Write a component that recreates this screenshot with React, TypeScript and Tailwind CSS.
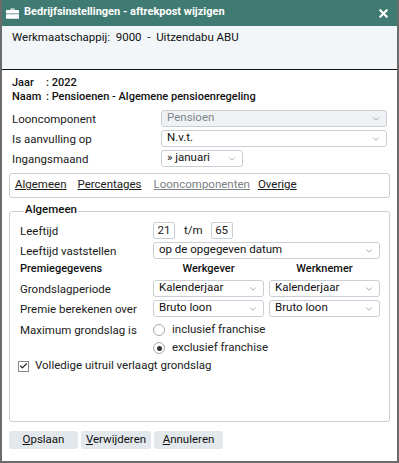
import { Check, ChevronDown, X } from 'lucide-react';

function Select({ value, className = '', disabled = false }: { value: string; className?: string; disabled?: boolean }) {
  return (
    <div
      className={`flex items-center justify-between h-[17px] pl-[5px] pr-[5px] border border-[#c9cfd4] rounded-[3px] ${
        disabled ? 'bg-[#eff2f5] text-[#80858a]' : 'bg-white text-[#111]'
      } ${className}`}
    >
      <span className="leading-none -mt-[2px]">{value}</span>
      <ChevronDown className="w-[10px] h-[10px] text-[#777]" strokeWidth={1.5} />
    </div>
  );
}

function Row({ label, w, children }: { label: string; w: string; children: React.ReactNode }) {
  return (
    <div className="flex items-center h-[17px]">
      <div className={`${w} shrink-0 pt-[3px]`}>{label}</div>
      {children}
    </div>
  );
}

function Radio({ checked, label }: { checked?: boolean; label: string }) {
  return (
    <div className="flex items-center gap-[7px] h-[18px]">
      <span className="w-[12px] h-[12px] rounded-full border border-[#a3a8ad] bg-white flex items-center justify-center">
        {checked && <span className="w-[5px] h-[5px] rounded-full bg-[#333]" />}
      </span>
      <span className="text-[#222]">{label}</span>
    </div>
  );
}

function Btn({ hot, rest, w }: { hot: string; rest: string; w: string }) {
  return (
    <button className={`h-[18px] ${w} bg-[#e3e8ec] rounded-[3px] text-center text-[#111] leading-none`}>
      <span className="underline">{hot}</span>
      {rest}
    </button>
  );
}

export default function App() {
  return (
    <div
      className="w-[399px] h-[463px] flex flex-col bg-white border-x-2 border-b-2 border-[#6b6b6b] text-[11.5px] text-[#1a1a1a] overflow-hidden"
      style={{ fontFamily: 'Roboto, "Liberation Sans", sans-serif' }}
    >
      <div className="h-[26px] bg-[#3f7b72] flex items-center justify-between -mx-[2px] pl-[6px] pr-[9px] text-white shrink-0">
        <div className="flex items-center gap-[5px]">
          <svg width="13" height="11" viewBox="0 0 13 11" fill="white">
            <path d="M4.5 0.5h4v1.5h-1v-0.5h-2v0.5h-1z" />
            <rect x="0" y="2" width="13" height="3.5" rx="0.5" />
            <rect x="0" y="6.3" width="13" height="4.5" rx="0.5" />
          </svg>
          <span className="font-bold text-[11px] pb-[1px]">Bedrijfsinstellingen - aftrekpost wijzigen</span>
        </div>
        <X className="w-[13px] h-[13px]" strokeWidth={4} />
      </div>

      <div className="h-[44px] bg-[#f2f6f9] border-b border-[#111] px-[10px] pt-[4px] shrink-0 text-[#111] leading-[14px]">
        Werkmaatschappij:&nbsp; 9000 &nbsp;- &nbsp;Uitzendabu ABU
      </div>

      <div className="flex-1 flex flex-col px-[7px] pt-[6px]">
        <div className="px-[3px] font-medium text-[11px] text-[#111] leading-[14px]">
          <div className="flex">
            <span className="w-[34px]">Jaar</span>
            <span>: 2022</span>
          </div>
          <div className="flex">
            <span className="w-[34px]">Naam</span>
            <span>: Pensioenen - Algemene pensioenregeling</span>
          </div>
        </div>

        <div className="px-[3px] mt-[6px] flex flex-col gap-[3px]">
          <Row label="Looncomponent" w="w-[149px]">
            <Select value="Pensioen" disabled className="w-[228px]" />
          </Row>
          <Row label="Is aanvulling op" w="w-[149px]">
            <Select value="N.v.t." className="w-[228px]" />
          </Row>
          <Row label="Ingangsmaand" w="w-[149px]">
            <Select value="» januari" className="w-[82px]" />
          </Row>
        </div>

        <div className="mt-[6px] h-[25px] border border-[#c9cfd4] rounded-[3px] flex items-center px-[5px] pb-[1px]">
          <span className="underline">Algemeen</span>
          <span className="underline ml-[11px]">Percentages</span>
          <span className="underline ml-[12px] text-[#7a7f85]">Looncomponenten</span>
          <span className="underline ml-[8px]">Overige</span>
        </div>

        <fieldset className="mt-[6px] h-[218px] border border-[#c9cfd4] rounded-[3px] pl-[10px] pr-[7px]">
          <legend className="px-[1px] ml-[4px] text-[11.5px] leading-[14px] font-medium text-[#111] -translate-y-[2px]">
            Algemeen
          </legend>
          <div className="flex flex-col mt-[4px]">
            <Row label="Leeftijd" w="w-[133px]">
              <div className="w-[22px] h-[17px] border border-[#c9cfd4] rounded-[2px] flex items-center justify-center">21</div>
              <span className="ml-[9px] mr-[8px]">t/m</span>
              <div className="w-[22px] h-[17px] border border-[#c9cfd4] rounded-[2px] flex items-center justify-center">65</div>
            </Row>
            <div className="mt-[3px]">
              <Row label="Leeftijd vaststellen" w="w-[133px]">
                <Select value="op de opgegeven datum" className="w-[227px]" />
              </Row>
            </div>
            <div className="flex items-center h-[16px] mt-[2px] font-medium text-[11px] text-[#111]">
              <div className="w-[133px]">Premiegegevens</div>
              <div className="w-[111px] text-center">Werkgever</div>
              <div className="w-[116px] text-center pl-[5px]">Werknemer</div>
            </div>
            <div className="mt-[3px] flex flex-col gap-[3px]">
              <Row label="Grondslagperiode" w="w-[133px]">
                <Select value="Kalenderjaar" className="w-[111px]" />
                <Select value="Kalenderjaar" className="w-[111px] ml-[5px]" />
              </Row>
              <Row label="Premie berekenen over" w="w-[133px]">
                <Select value="Bruto loon" className="w-[111px]" />
                <Select value="Bruto loon" className="w-[111px] ml-[5px]" />
              </Row>
            </div>
            <div className="flex mt-[4px]">
              <div className="w-[133px] shrink-0 pt-[1px]">Maximum grondslag is</div>
              <div className="flex flex-col">
                <Radio label="inclusief franchise" />
                <Radio label="exclusief franchise" checked />
              </div>
            </div>
            <div className="flex items-center gap-[6px] -ml-[2px] h-[18px]">
              <span className="w-[11px] h-[11px] border border-[#888] bg-white flex items-center justify-center">
                <Check className="w-[10px] h-[10px] text-[#222]" strokeWidth={3} />
              </span>
              <span>Volledige uitruil verlaagt grondslag</span>
            </div>
          </div>
        </fieldset>

        <div className="flex gap-[3px] mt-[9px]">
          <Btn hot="O" rest="pslaan" w="w-[69px]" />
          <Btn hot="V" rest="erwijderen" w="w-[70px]" />
          <Btn hot="A" rest="nnuleren" w="w-[69px]" />
        </div>
      </div>
    </div>
  );
}
